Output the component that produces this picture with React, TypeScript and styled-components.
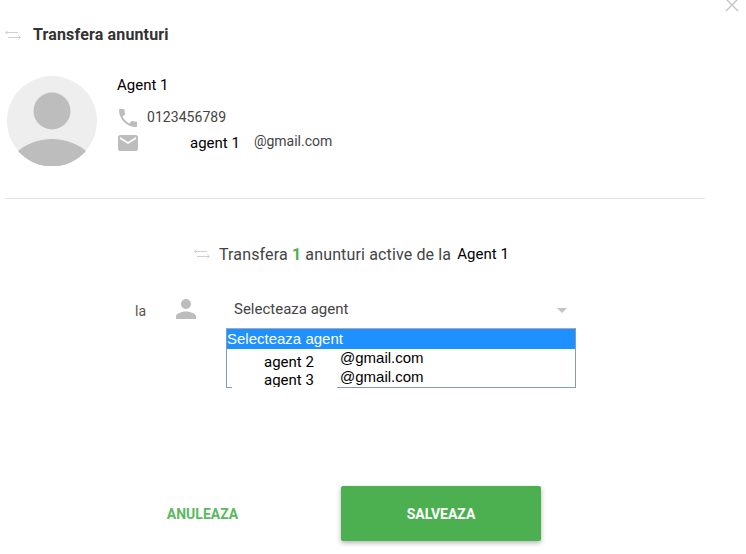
import React from "react";
import styled, { createGlobalStyle } from "styled-components";

const Global = createGlobalStyle`
  html, body {
    margin: 0;
    padding: 0;
    background: #fff;
  }
  body {
    font-family: Roboto, "Liberation Sans", sans-serif;
    color: #444;
  }
`;

const Page = styled.div`
  position: relative;
  width: 746px;
  height: 554px;
  overflow: hidden;
  background: #fff;
`;

const CloseIcon = styled.svg`
  position: absolute;
  top: -2px;
  right: 7px;
  width: 14px;
  height: 14px;
  stroke: #c4c4c4;
  stroke-width: 1.4;
  fill: none;
`;

const Header = styled.div`
  display: flex;
  align-items: center;
  gap: 12px;
  height: 20px;
  padding: 25px 0 0 5px;
`;

const Title = styled.h1`
  margin: 0;
  font-size: 16px;
  font-weight: 700;
  line-height: 20px;
  letter-spacing: 0.15px;
  color: #333;
`;

const Arrows = styled.svg`
  width: 16px;
  height: 10px;
  stroke: #cfcfcf;
  stroke-width: 1;
  fill: none;
  flex: none;
`;

const Profile = styled.div`
  display: flex;
  gap: 20px;
  padding: 31px 0 0 7px;
`;

const Avatar = styled.svg`
  width: 90px;
  height: 90px;
  flex: none;
`;

const Info = styled.div`
  display: flex;
  flex-direction: column;
`;

const AgentName = styled.div`
  font-size: 15px;
  line-height: 18px;
  color: #000;
`;

const ContactRow = styled.div<{ $top: number }>`
  display: flex;
  align-items: center;
  height: 22px;
  margin-top: ${(p) => p.$top}px;
  font-size: 14px;
  color: #444;
`;

const ContactIcon = styled.svg`
  width: 24px;
  height: 24px;
  fill: #bdbdbd;
  flex: none;
  margin-left: -1px;
`;

const Phone = styled.span`
  margin-left: 7px;
  position: relative;
  top: -1px;
  letter-spacing: 0.05px;
`;

const MailAgent = styled.span`
  margin-left: 50px;
  font-size: 15px;
  color: #000;
`;

const MailDomain = styled.span`
  margin-left: 14px;
  position: relative;
  top: -2px;
`;

const Divider = styled.hr`
  margin: 32px 0 0 5px;
  width: 700px;
  height: 1px;
  border: 0;
  background: #e4e4e4;
`;

const TransferLine = styled.div`
  display: flex;
  align-items: center;
  height: 20px;
  margin: 45px 0 0 194px;
  font-size: 16px;
  color: #444;
  white-space: pre;
  letter-spacing: 0.14px;
`;

const TransferArrows = styled(Arrows)`
  margin-right: 9px;
`;

const Count = styled.b`
  color: #4caf50;
  font-weight: 700;
`;

const TransferName = styled.span`
  margin-left: 2px;
  color: #000;
  font-size: 15px;
  letter-spacing: 0;
`;

const FormRow = styled.div`
  display: flex;
  align-items: center;
  height: 24px;
  margin: 33px 0 0 135px;
`;

const FieldLabel = styled.label`
  width: 36px;
  font-size: 14px;
  color: #555;
  position: relative;
  top: 2px;
`;

const PersonIcon = styled.svg`
  width: 30px;
  height: 30px;
  fill: #bdbdbd;
  flex: none;
`;

const Select = styled.div`
  display: flex;
  align-items: center;
  justify-content: space-between;
  box-sizing: border-box;
  width: 366px;
  padding-left: 33px;
  font-size: 15px;
  color: #444;
`;

const Caret = styled.span`
  width: 0;
  height: 0;
  margin-top: 3px;
  border-left: 5.5px solid transparent;
  border-right: 5.5px solid transparent;
  border-top: 5.5px solid #c4c4c4;
`;

const Dropdown = styled.ul`
  position: absolute;
  left: 226px;
  top: 328px;
  box-sizing: border-box;
  width: 350px;
  height: 60px;
  margin: 0;
  padding: 0;
  list-style: none;
  border: 1px solid #7f9db9;
  border-top-color: #a9a9a9;
  font-family: "Liberation Sans", Arial, sans-serif;
  font-size: 15px;
  color: #000;
  background: #fff;
`;

const Option = styled.li<{ $active?: boolean }>`
  display: flex;
  align-items: center;
  box-sizing: border-box;
  height: ${(p) => (p.$active ? 20 : 18.5)}px;
  padding-bottom: 1px;
  color: ${(p) => (p.$active ? "#fff" : "#000")};
  background: ${(p) => (p.$active ? "#1e90ff" : "transparent")};
`;

const OptionName = styled.span`
  width: 76px;
  margin-left: 37px;
  position: relative;
  top: 4px;
  font-family: Roboto, sans-serif;
  font-size: 15px;
`;

const Mask = styled.span`
  position: absolute;
  left: 5px;
  bottom: -1px;
  width: 105px;
  height: 1px;
  background: #fff;
`;

const Actions = styled.div`
  position: absolute;
  left: 0;
  bottom: 13px;
  display: flex;
  align-items: center;
`;

const CancelButton = styled.button`
  width: 341px;
  padding: 0 0 0 64px;
  border: 0;
  background: none;
  font: 700 14px Roboto, sans-serif;
  color: #5cb860;
`;

const SaveButton = styled.button`
  width: 200px;
  height: 55px;
  border: 0;
  border-radius: 2px;
  background: #4caf50;
  box-shadow: 0 2px 5px rgba(0, 0, 0, 0.3);
  font: 700 14px Roboto, sans-serif;
  color: #fff;
`;

const ArrowsGlyph = () => (
  <>
    <path d="M13 2.5H0.7M2.7 0.5L0.7 2.5l2 2" />
    <path d="M3 7.5h12.3M13.3 5.5l2 2-2 2" />
  </>
);

export default function App() {
  return (
    <Page>
      <Global />
      <CloseIcon viewBox="0 0 14 14">
        <path d="M1 1l12 12M13 1L1 13" />
      </CloseIcon>
      <Header>
        <Arrows viewBox="0 0 16 10">
          <ArrowsGlyph />
        </Arrows>
        <Title>Transfera anunturi</Title>
      </Header>
      <Profile>
        <Avatar viewBox="0 0 90 90">
          <circle cx="45" cy="45" r="45" fill="#eeeeee" />
          <circle cx="45" cy="35" r="18.5" fill="#bdbdbd" />
          <path d="M11 75c8-7 20-12 34-12s26 5 34 12a45 45 0 0 1-68 0z" fill="#bdbdbd" />
        </Avatar>
        <Info>
          <AgentName>Agent 1</AgentName>
          <ContactRow $top={13}>
            <ContactIcon viewBox="0 0 24 24">
              <path d="M6.6 10.8c1.4 2.8 3.8 5.1 6.6 6.6l2.2-2.2c.3-.3.7-.4 1-.2 1.1.4 2.3.6 3.6.6.6 0 1 .4 1 1V20c0 .6-.4 1-1 1C10.6 21 3 13.4 3 4c0-.6.4-1 1-1h3.5c.6 0 1 .4 1 1 0 1.3.2 2.5.6 3.6.1.3 0 .7-.2 1l-2.3 2.2z" />
            </ContactIcon>
            <Phone>0123456789</Phone>
          </ContactRow>
          <ContactRow $top={3}>
            <ContactIcon viewBox="0 0 24 24">
              <path d="M20 4H4c-1.1 0-2 .9-2 2v12c0 1.1.9 2 2 2h16c1.1 0 2-.9 2-2V6c0-1.1-.9-2-2-2zm0 4l-8 5-8-5V6l8 5 8-5v2z" />
            </ContactIcon>
            <MailAgent>agent 1</MailAgent>
            <MailDomain>@gmail.com</MailDomain>
          </ContactRow>
        </Info>
      </Profile>
      <Divider />
      <TransferLine>
        <TransferArrows viewBox="0 0 16 10">
          <ArrowsGlyph />
        </TransferArrows>
        Transfera <Count>1</Count> anunturi active de la <TransferName>Agent 1</TransferName>
      </TransferLine>
      <FormRow>
        <FieldLabel>la</FieldLabel>
        <PersonIcon viewBox="0 0 24 24">
          <path d="M12 12c2.2 0 4-1.8 4-4s-1.8-4-4-4-4 1.8-4 4 1.8 4 4 4zm0 2c-2.7 0-8 1.3-8 4v2h16v-2c0-2.7-5.3-4-8-4z" />
        </PersonIcon>
        <Select>
          Selecteaza agent
          <Caret />
        </Select>
      </FormRow>
      <Dropdown>
        <Option $active>Selecteaza agent</Option>
        <Option>
          <OptionName>agent 2</OptionName>@gmail.com
        </Option>
        <Option>
          <OptionName>agent 3</OptionName>@gmail.com
        </Option>
        <Mask />
      </Dropdown>
      <Actions>
        <CancelButton>ANULEAZA</CancelButton>
        <SaveButton>SALVEAZA</SaveButton>
      </Actions>
    </Page>
  );
}
